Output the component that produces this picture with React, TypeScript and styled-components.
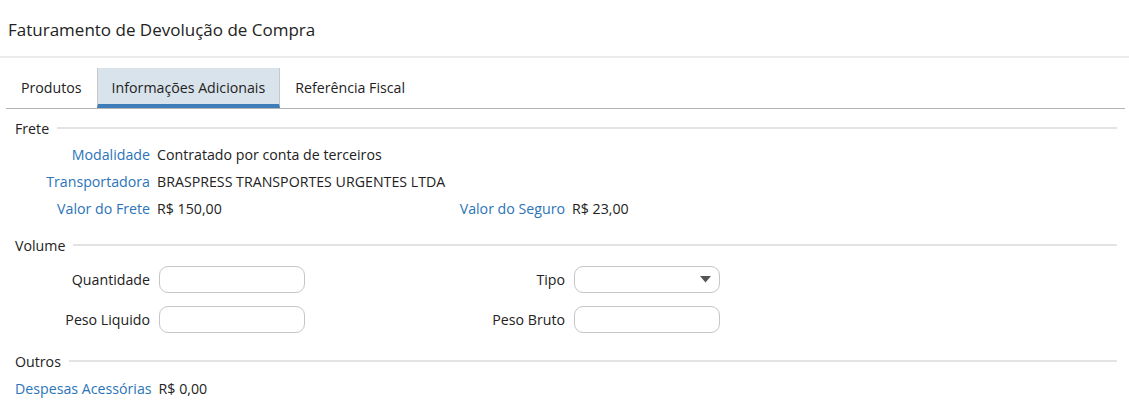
import React from "react";
import styled, { createGlobalStyle } from "styled-components";

const GlobalStyle = createGlobalStyle`
  html, body { margin: 0; padding: 0; background: #ffffff; }
  body { font-family: "Open Sans", "Noto Sans", sans-serif; color: #222; }
`;

const Page = styled.div`
  width: 1129px;
  height: 401px;
  overflow: hidden;
  background: #fff;
`;

const Header = styled.div`
  height: 58px;
  padding-left: 8px;
  display: flex;
  align-items: center;
  border-bottom: 2px solid #ebebeb;
  font-size: 17px;
  color: #222;
  padding-top: 2px;
  box-sizing: border-box;
`;

const Tabs = styled.div`
  display: flex;
  margin: 10px 4px 0 6px;
  border-bottom: 1px solid #b4b4b4;
  height: 40px;
`;

const Tab = styled.div<{ active?: boolean }>`
  display: flex;
  align-items: center;
  padding: 0 14px;
  font-size: 14.2px;
  color: #222;
  box-sizing: border-box;
  background: ${({ active }) => (active ? "#d9e3ec" : "transparent")};
  border-bottom: 4px solid ${({ active }) => (active ? "#3f7cba" : "transparent")};
  border-left: 1px solid ${({ active }) => (active ? "#c8c8c8" : "transparent")};
  border-right: 1px solid ${({ active }) => (active ? "#c8c8c8" : "transparent")};
  padding-top: 3px;
`;

const Body = styled.div`
  padding: 9px 12px 0 15px;
`;

const Legend = styled.div<{ gapTop?: number }>`
  display: flex;
  align-items: center;
  gap: 8px;
  font-size: 14.2px;
  height: 20px;
  margin-top: ${({ gapTop }) => gapTop ?? 0}px;
  &::after {
    content: "";
    flex: 1;
    height: 2px;
    background: #e3e3e3;
  }
`;

const Grid = styled.div`
  display: grid;
  grid-template-columns: 135px 266px 135px 1fr;
  row-gap: 7px;
  column-gap: 7px;
  margin-top: 7px;
  align-items: center;
`;

const Label = styled.div<{ link?: boolean }>`
  text-align: right;
  font-size: 14.2px;
  white-space: nowrap;
  color: ${({ link }) => (link ? "#2b74b9" : "#222")};
  height: 20px;
  line-height: 20px;
`;

const Value = styled.div<{ span?: number }>`
  font-size: 14.2px;
  color: #222;
  white-space: nowrap;
  line-height: 20px;
  grid-column: span ${({ span }) => span ?? 1};
`;

const FieldGrid = styled(Grid)`
  row-gap: 13px;
  margin-top: 11px;
  margin-bottom: 18px;
`;

const Input = styled.div`
  width: 146px;
  height: 27px;
  box-sizing: border-box;
  border: 1px solid #c6c6c6;
  border-radius: 9px;
  margin-left: 2px;
  background: #fff;
`;

const Select = styled(Input)`
  display: flex;
  align-items: center;
  justify-content: flex-end;
  padding-right: 8px;
`;

const Caret = () => (
  <svg width="11" height="7" viewBox="0 0 11 7">
    <path d="M0 0 H11 L5.5 6.5 Z" fill="#555" />
  </svg>
);

const Outros = styled.div`
  display: flex;
  gap: 7px;
  margin-top: 8px;
`;

export default function App() {
  return (
    <Page>
      <GlobalStyle />
      <Header>Faturamento de Devolução de Compra</Header>
      <Tabs>
        <Tab>Produtos</Tab>
        <Tab active>Informações Adicionais</Tab>
        <Tab>Referência Fiscal</Tab>
      </Tabs>
      <Body>
        <Legend>Frete</Legend>
        <Grid>
          <Label link>Modalidade</Label>
          <Value span={3}>Contratado por conta de terceiros</Value>
          <Label link>Transportadora</Label>
          <Value span={3}>BRASPRESS TRANSPORTES URGENTES LTDA</Value>
          <Label link>Valor do Frete</Label>
          <Value>R$ 150,00</Value>
          <Label link>Valor do Seguro</Label>
          <Value>R$ 23,00</Value>
        </Grid>
        <Legend gapTop={16}>Volume</Legend>
        <FieldGrid>
          <Label>Quantidade</Label>
          <Input />
          <Label>Tipo</Label>
          <Select>
            <Caret />
          </Select>
          <Label>Peso Liquido</Label>
          <Input />
          <Label>Peso Bruto</Label>
          <Input />
        </FieldGrid>
        <Legend>Outros</Legend>
        <Outros>
          <Label link>Despesas Acessórias</Label>
          <Value>R$ 0,00</Value>
        </Outros>
      </Body>
    </Page>
  );
}
